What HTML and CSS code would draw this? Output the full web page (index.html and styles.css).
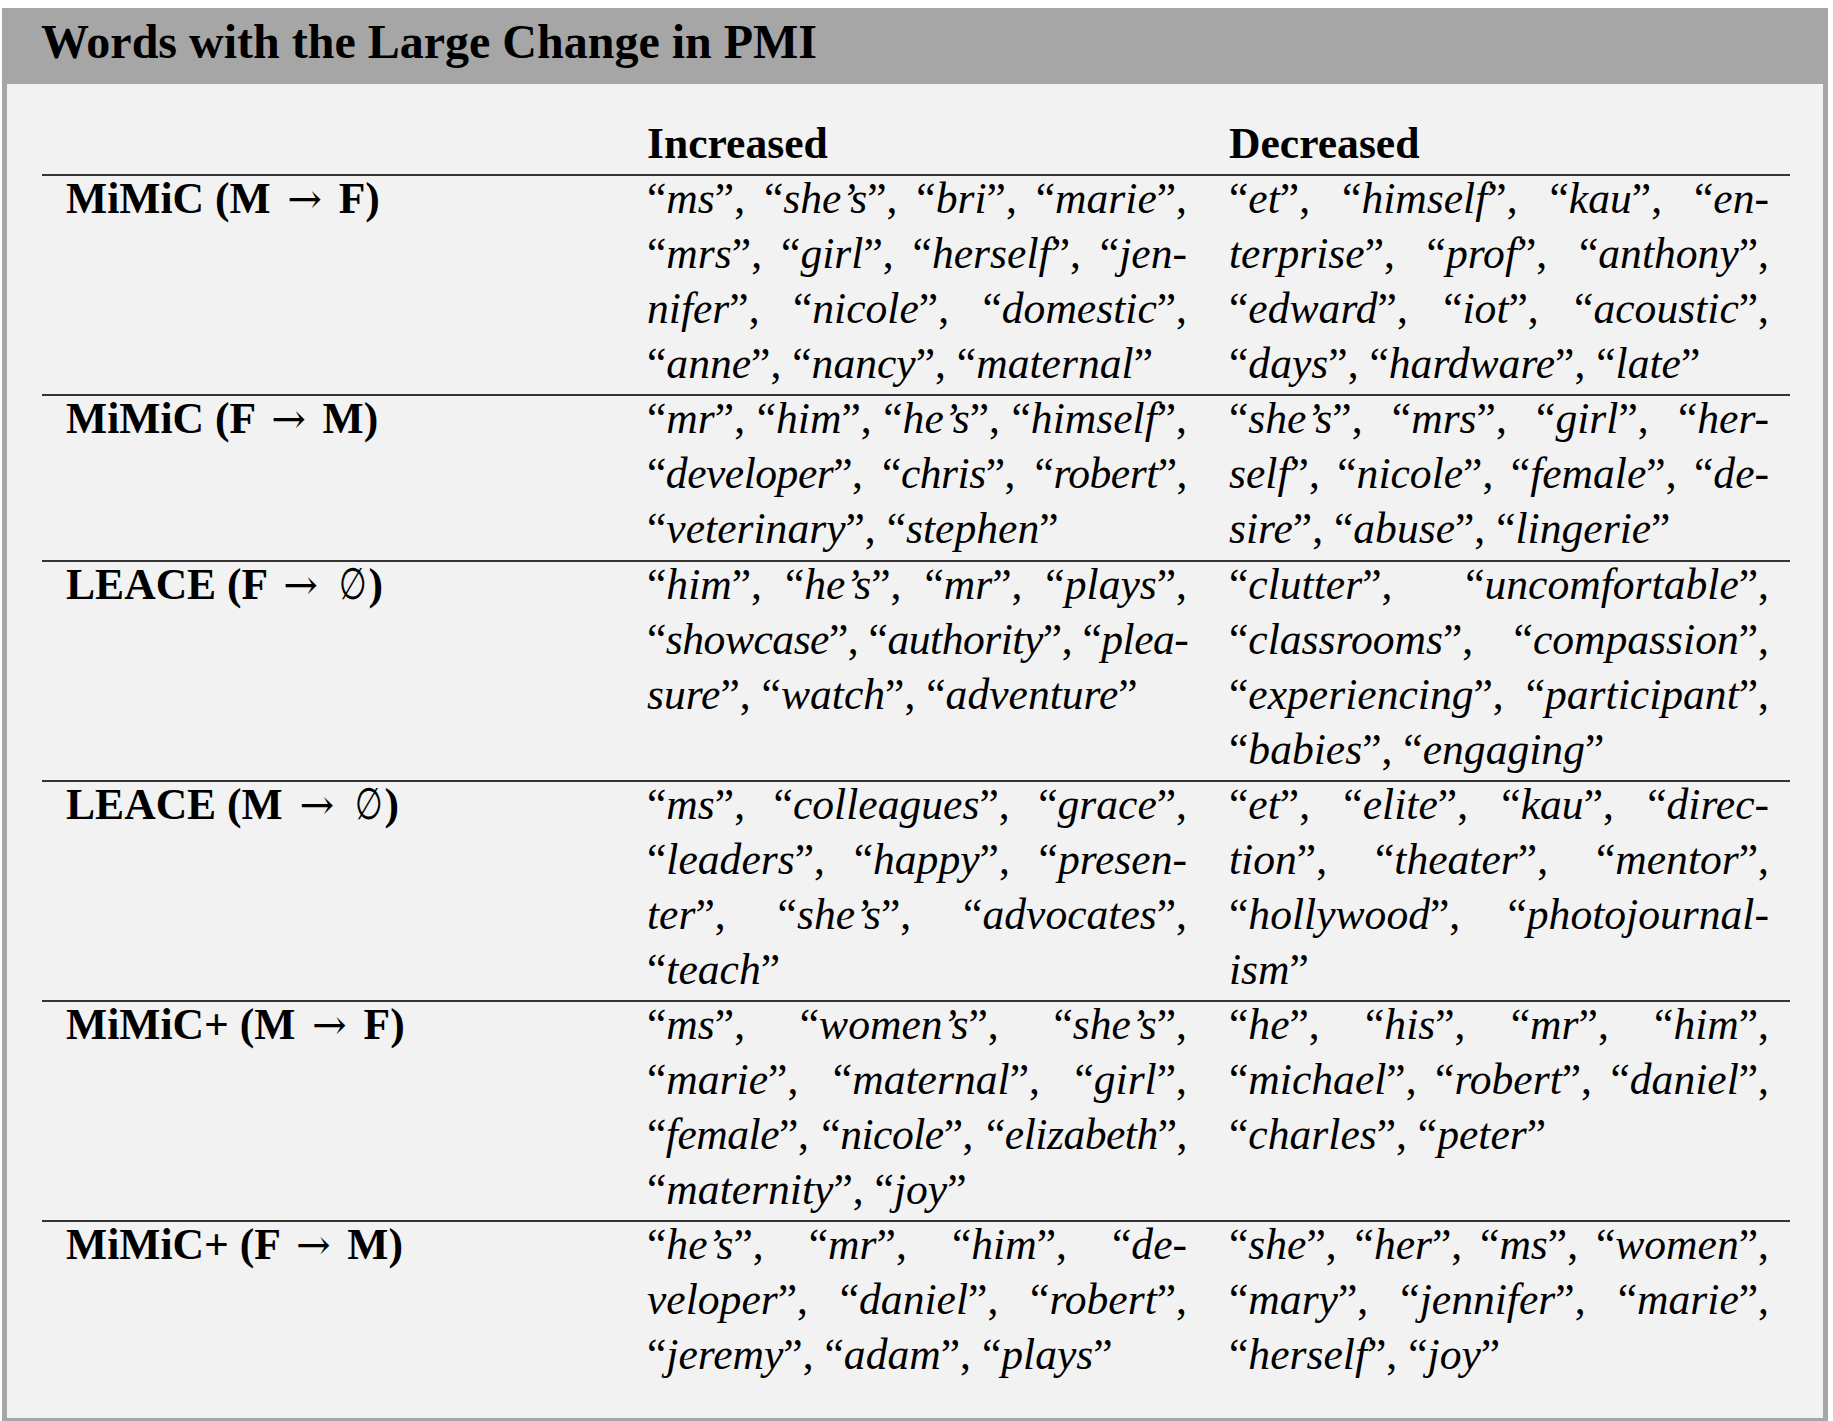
FILE: index.html
```html
<!DOCTYPE html>
<html lang="en">
<head>
<meta charset="utf-8">
<title>Words with the Large Change in PMI</title>
<link rel="stylesheet" href="styles.css">
</head>
<body>
<div class="frame">
  <div class="band"><h1 class="title">Words with the Large Change in PMI</h1></div>
  <div class="panel">
    <div class="table">
      <div class="head">
        <div class="cell c1"></div>
        <div class="cell c2 colhead">Increased</div>
        <div class="cell c3 colhead">Decreased</div>
      </div>

      <div class="row">
        <div class="cell c1 label">MiMiC (M <span class="arrow">→</span> F)</div>
        <div class="cell c2 words">
          <div class="ln">“<i>ms</i>”, “<i>she’s</i>”, “<i>bri</i>”, “<i>marie</i>”,</div>
          <div class="ln">“<i>mrs</i>”, “<i>girl</i>”, “<i>herself</i>”, “<i>jen-</i></div>
          <div class="ln"><i>nifer</i>”, “<i>nicole</i>”, “<i>domestic</i>”,</div>
          <div class="ln">“<i>anne</i>”, “<i>nancy</i>”, “<i>maternal</i>”</div>
        </div>
        <div class="cell c3 words">
          <div class="ln">“<i>et</i>”, “<i>himself</i>”, “<i>kau</i>”, “<i>en-</i></div>
          <div class="ln"><i>terprise</i>”, “<i>prof</i>”, “<i>anthony</i>”,</div>
          <div class="ln">“<i>edward</i>”, “<i>iot</i>”, “<i>acoustic</i>”,</div>
          <div class="ln">“<i>days</i>”, “<i>hardware</i>”, “<i>late</i>”</div>
        </div>
      </div>

      <div class="row">
        <div class="cell c1 label">MiMiC (F <span class="arrow">→</span> M)</div>
        <div class="cell c2 words">
          <div class="ln">“<i>mr</i>”, “<i>him</i>”, “<i>he’s</i>”, “<i>himself</i>”,</div>
          <div class="ln tight">“<i>developer</i>”, “<i>chris</i>”, “<i>robert</i>”,</div>
          <div class="ln">“<i>veterinary</i>”, “<i>stephen</i>”</div>
        </div>
        <div class="cell c3 words">
          <div class="ln">“<i>she’s</i>”, “<i>mrs</i>”, “<i>girl</i>”, “<i>her-</i></div>
          <div class="ln"><i>self</i>”, “<i>nicole</i>”, “<i>female</i>”, “<i>de-</i></div>
          <div class="ln"><i>sire</i>”, “<i>abuse</i>”, “<i>lingerie</i>”</div>
        </div>
      </div>

      <div class="row">
        <div class="cell c1 label">LEACE (F <span class="arrow">→</span> <span class="empty">∅</span>)</div>
        <div class="cell c2 words">
          <div class="ln">“<i>him</i>”, “<i>he’s</i>”, “<i>mr</i>”, “<i>plays</i>”,</div>
          <div class="ln tight">“<i>showcase</i>”, “<i>authority</i>”, “<i>plea-</i></div>
          <div class="ln"><i>sure</i>”, “<i>watch</i>”, “<i>adventure</i>”</div>
        </div>
        <div class="cell c3 words">
          <div class="ln">“<i>clutter</i>”, “<i>uncomfortable</i>”,</div>
          <div class="ln">“<i>classrooms</i>”, “<i>compassion</i>”,</div>
          <div class="ln">“<i>experiencing</i>”, “<i>participant</i>”,</div>
          <div class="ln">“<i>babies</i>”, “<i>engaging</i>”</div>
        </div>
      </div>

      <div class="row">
        <div class="cell c1 label">LEACE (M <span class="arrow">→</span> <span class="empty">∅</span>)</div>
        <div class="cell c2 words">
          <div class="ln">“<i>ms</i>”, “<i>colleagues</i>”, “<i>grace</i>”,</div>
          <div class="ln">“<i>leaders</i>”, “<i>happy</i>”, “<i>presen-</i></div>
          <div class="ln"><i>ter</i>”, “<i>she’s</i>”, “<i>advocates</i>”,</div>
          <div class="ln">“<i>teach</i>”</div>
        </div>
        <div class="cell c3 words">
          <div class="ln">“<i>et</i>”, “<i>elite</i>”, “<i>kau</i>”, “<i>direc-</i></div>
          <div class="ln"><i>tion</i>”, “<i>theater</i>”, “<i>mentor</i>”,</div>
          <div class="ln">“<i>hollywood</i>”, “<i>photojournal-</i></div>
          <div class="ln"><i>ism</i>”</div>
        </div>
      </div>

      <div class="row">
        <div class="cell c1 label">MiMiC+ (M <span class="arrow">→</span> F)</div>
        <div class="cell c2 words">
          <div class="ln">“<i>ms</i>”, “<i>women’s</i>”, “<i>she’s</i>”,</div>
          <div class="ln">“<i>marie</i>”, “<i>maternal</i>”, “<i>girl</i>”,</div>
          <div class="ln tight">“<i>female</i>”, “<i>nicole</i>”, “<i>elizabeth</i>”,</div>
          <div class="ln">“<i>maternity</i>”, “<i>joy</i>”</div>
        </div>
        <div class="cell c3 words">
          <div class="ln">“<i>he</i>”, “<i>his</i>”, “<i>mr</i>”, “<i>him</i>”,</div>
          <div class="ln">“<i>michael</i>”, “<i>robert</i>”, “<i>daniel</i>”,</div>
          <div class="ln">“<i>charles</i>”, “<i>peter</i>”</div>
        </div>
      </div>

      <div class="row">
        <div class="cell c1 label">MiMiC+ (F <span class="arrow">→</span> M)</div>
        <div class="cell c2 words">
          <div class="ln">“<i>he’s</i>”, “<i>mr</i>”, “<i>him</i>”, “<i>de-</i></div>
          <div class="ln"><i>veloper</i>”, “<i>daniel</i>”, “<i>robert</i>”,</div>
          <div class="ln">“<i>jeremy</i>”, “<i>adam</i>”, “<i>plays</i>”</div>
        </div>
        <div class="cell c3 words">
          <div class="ln">“<i>she</i>”, “<i>her</i>”, “<i>ms</i>”, “<i>women</i>”,</div>
          <div class="ln">“<i>mary</i>”, “<i>jennifer</i>”, “<i>marie</i>”,</div>
          <div class="ln">“<i>herself</i>”, “<i>joy</i>”</div>
        </div>
      </div>
    </div>
  </div>
</div>
</body>
</html>
```

FILE: styles.css
```css
html, body {
  margin: 0;
  padding: 0;
  background: #ffffff;
}

body {
  font-family: "Liberation Serif", "Times New Roman", serif;
  color: #000;
}

.frame {
  margin: 8px 0 0 2px;
  width: 1826px;
  box-sizing: border-box;
  border-left: 5px solid #a6a6a6;
  border-right: 5px solid #a6a6a6;
  border-bottom: 4px solid #a6a6a6;
}

.band {
  background: #a6a6a6;
  height: 76px;
  padding-left: 34px;
  box-sizing: border-box;
}

.title {
  margin: 0;
  font-size: 48px;
  font-weight: bold;
  line-height: 68px;
}

.panel {
  background: #f2f2f2;
  padding: 32px 0 32px 35px;
}

.table {
  width: 1748px;
  font-size: 43.6px;
  line-height: 55px;
}

.head,
.row {
  display: grid;
  grid-template-columns: 584px 582px 582px;
}

.row {
  border-top: 2px solid #333333;
}

.cell {
  padding: 0 21px;
}

.c1 {
  padding-left: 24px;
}

.head .cell {
  margin-bottom: 3px;
}

.row .cell {
  margin: -5px 0 3.25px;
}

.colhead,
.label {
  font-weight: bold;
}

.arrow {
  font-family: "DejaVu Serif", serif;
  font-weight: normal;
  font-size: 0.95em;
  margin: 0 0.14em;
}

.empty {
  display: inline-block;
  font-family: "DejaVu Serif", serif;
  font-weight: normal;
  transform: scaleX(0.72);
  margin: 0 -0.08em 0 -0.02em;
}

.words .ln {
  white-space: nowrap;
  text-align: justify;
  text-align-last: justify;
}

.words .ln.tight {
  letter-spacing: -0.5px;
}

.words .ln:last-child {
  text-align-last: left;
}
```
